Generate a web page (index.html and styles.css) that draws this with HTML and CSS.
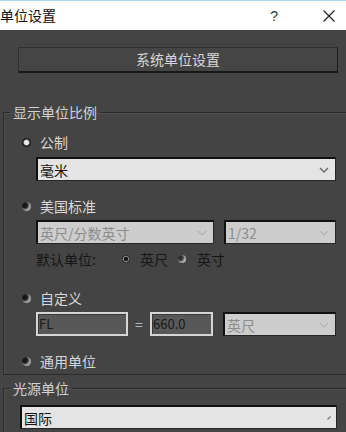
FILE: index.html
```html
<!DOCTYPE html>
<html lang="zh">
<head>
    <meta charset="UTF-8">
    <title>单位设置</title>
    <link rel="stylesheet" href="styles.css">
</head>
<body>
    <div class="titlebar">
        <span class="title">单位设置</span>
        <span class="help">?</span>
        <svg class="close" width="12" height="12" viewBox="0 0 12 12">
            <path d="M0.5 0.5 L11.5 11.5 M11.5 0.5 L0.5 11.5" stroke="#222" stroke-width="1.2" fill="none"/>
        </svg>
    </div>
    <div class="content">
        <div class="sys-btn">系统单位设置</div>

        <fieldset class="group">
            <legend>显示单位比例</legend>
            <div class="option first"><span class="radio checked"></span>公制</div>
            <div class="select metric">
                <span>毫米</span>
                <svg class="chevron" width="10" height="6" viewBox="0 0 10 6"><path d="M1 1 L5 5 L9 1" stroke="#6a6a6a" stroke-width="1.4" fill="none"/></svg>
            </div>

            <div class="option us"><span class="radio"></span>美国标准</div>
            <div class="row us-selects">
                <div class="select disabled feet">
                    <span>英尺/分数英寸</span>
                    <svg class="chevron" width="10" height="6" viewBox="0 0 10 6"><path d="M1 1 L5 5 L9 1" stroke="#b4b4b4" stroke-width="1.4" fill="none"/></svg>
                </div>
                <div class="select disabled frac">
                    <span>1/32</span>
                    <svg class="chevron" width="10" height="6" viewBox="0 0 10 6"><path d="M1 1 L5 5 L9 1" stroke="#b4b4b4" stroke-width="1.4" fill="none"/></svg>
                </div>
            </div>
            <div class="row default-unit">
                <span class="dim-label">默认单位:</span>
                <span class="radio small checked-dark"></span><span class="dim-label">英尺</span>
                <span class="radio small second"></span><span class="dim-label">英寸</span>
            </div>

            <div class="option custom"><span class="radio"></span>自定义</div>
            <div class="row custom-fields">
                <div class="field name">FL</div>
                <span class="equals">=</span>
                <div class="field value">660.0</div>
                <div class="select disabled custom-unit">
                    <span>英尺</span>
                    <svg class="chevron" width="10" height="6" viewBox="0 0 10 6"><path d="M1 1 L5 5 L9 1" stroke="#b4b4b4" stroke-width="1.4" fill="none"/></svg>
                </div>
            </div>

            <div class="option generic"><span class="radio"></span>通用单位</div>
        </fieldset>

        <fieldset class="group light">
            <legend>光源单位</legend>
            <div class="select intl">
                <span>国际</span>
                <svg class="tick" width="4" height="4" viewBox="0 0 4 4"><path d="M0.5 3.5 L3.5 0.5" stroke="#777" stroke-width="1.2"/></svg>
            </div>
        </fieldset>
    </div>
</body>
</html>
```

FILE: styles.css
```css
* {
    margin: 0;
    padding: 0;
    box-sizing: border-box;
}
body {
    font-family: "Noto Sans CJK SC", "Noto Sans", sans-serif;
    font-size: 14px;
    line-height: 18px;
    background-color: #444444;
    color: #d6d6d6;
    width: 346px;
    height: 432px;
    overflow: hidden;
}
.titlebar {
    height: 30px;
    background-color: #ffffff;
    border-top: 1px solid #a9dcee;
    display: flex;
    align-items: center;
    color: #111111;
}
.title {
    font-size: 14px;
    margin-top: -2px;
}
.help {
    margin-left: auto;
    font-family: "Liberation Sans", sans-serif;
    font-size: 14px;
    color: #333333;
}
.close {
    margin-left: 45px;
    margin-right: 11px;
}
.content {
    padding-top: 17px;
}
.sys-btn {
    margin: 0 8px 0 18px;
    height: 26px;
    border: 1px solid #2f2f2f;
    border-right-color: #1a1a1a;
    border-bottom: 2px solid #181818;
    background-color: #454545;
    text-align: center;
    line-height: 23px;
    color: #d8d8d8;
}
.group {
    margin: 31px -10px 0 3px;
    padding: 0 10px 4px 0;
    border: 1px solid #2a2a2a;
    box-shadow: inset 1px 1px 0 #505050;
    min-width: 0;
}
.group legend {
    margin-left: 6px;
    padding: 0 3px;
    line-height: 16px;
    color: #d2d2d2;
}
.group.light {
    margin-top: 5px;
    padding-bottom: 20px;
}
.option {
    display: flex;
    align-items: center;
    height: 18px;
    padding-left: 18px;
    color: #d8d8d8;
}
.option.first {
    margin-top: 13px;
}
.option.us {
    margin-top: 16px;
}
.option.custom {
    margin-top: 21px;
}
.option.generic {
    margin-top: 16px;
}
.radio {
    width: 9px;
    height: 9px;
    border-radius: 50%;
    margin-right: 9px;
    background: radial-gradient(circle at 30% 35%, #141414 0, #1c1c1c 30%, #9a9a9a 58%, #c4c4c4 100%);
    flex-shrink: 0;
}
.radio.checked {
    background: radial-gradient(circle, #f4f4f4 0, #e0e0e0 35%, #1a1a1a 55%, #2a2a2a 100%);
}
.radio.small {
    width: 8px;
    height: 8px;
    margin-right: 10px;
}
.radio.checked-dark {
    margin-left: 26px;
    background: radial-gradient(circle, #151515 0, #151515 30%, #8a8a8a 45%, #1a1a1a 70%, #2a2a2a 100%);
}
.radio.second {
    margin-left: 10px;
    margin-right: 11px;
    background: radial-gradient(circle at 30% 35%, #2a2a2a 0, #333 28%, #a4a4a4 58%, #cccccc 100%);
}
.select {
    height: 24px;
    display: flex;
    align-items: center;
    justify-content: space-between;
    padding: 0 6px 0 2px;
    background-color: #e4e4e4;
    border: 1px solid #262626;
    border-top: 2px solid #111111;
    border-left: 2px solid #111111;
    color: #111111;
}
.select.metric {
    margin: 6px 0 0 32px;
    width: 300px;
}
.select.disabled {
    background-color: #cdcdcd;
    color: #8c8c8c;
}
.row {
    display: flex;
    align-items: center;
    margin-left: 32px;
}
.us-selects {
    margin-top: 5px;
    gap: 10px;
}
.select.feet {
    width: 178px;
}
.select.frac {
    width: 112px;
}
.default-unit {
    margin-top: 6px;
    height: 18px;
}
.dim-label {
    color: #161616;
}
.custom-fields {
    margin-top: 5px;
}
.field {
    height: 24px;
    border: 2px solid #d6d6d6;
    background-color: #585858;
    box-shadow: inset 1px 1px 0 #3a3a3a;
    color: #1a1a1a;
    font-size: 13px;
    line-height: 20px;
    padding-left: 1px;
}
.field.name {
    width: 92px;
}
.field.value {
    width: 63px;
}
.equals {
    width: 22px;
    text-align: center;
    color: #b8b8b8;
}
.select.custom-unit {
    margin-left: 10px;
    width: 113px;
}
.select.intl {
    margin: 9px 0 0 16px;
    width: 317px;
    padding-right: 5px;
}
```
